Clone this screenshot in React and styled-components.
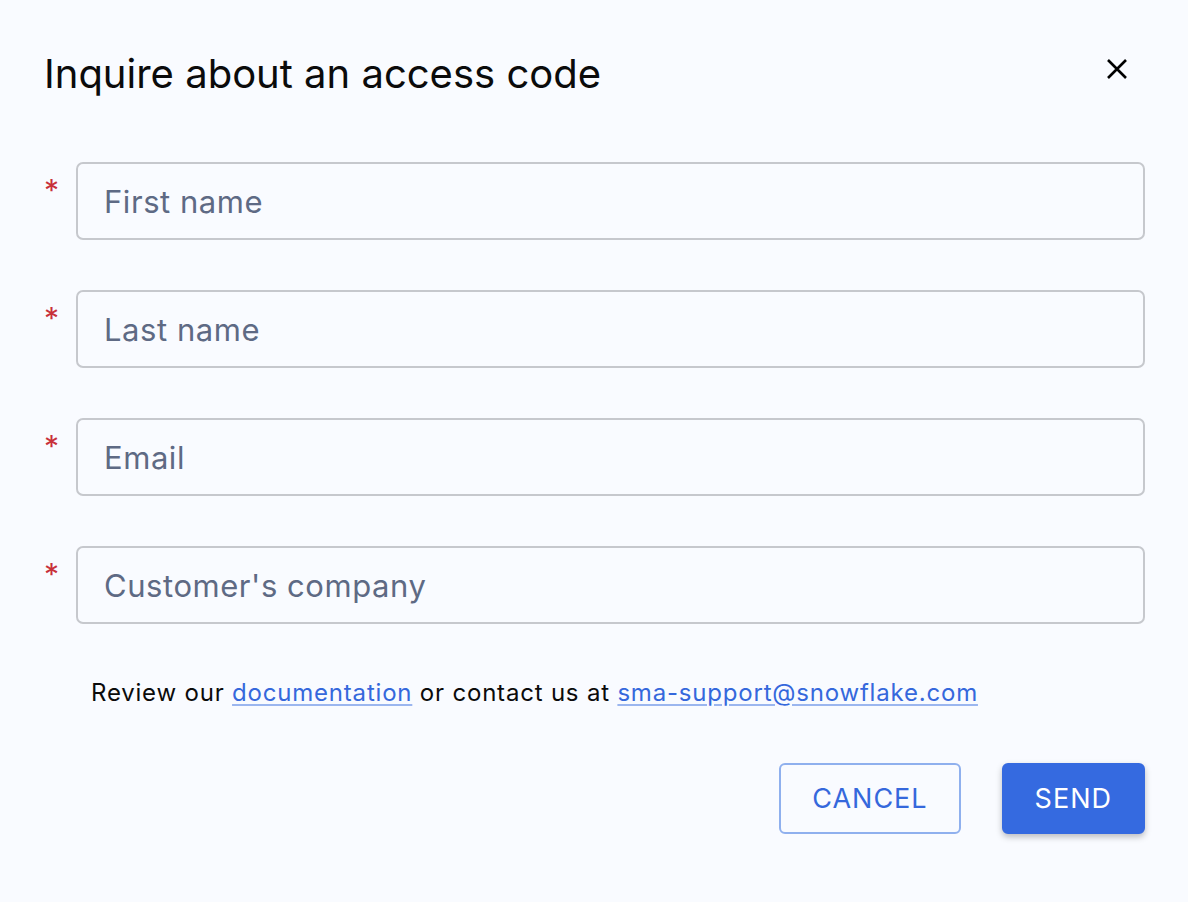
import React from 'react'
import styled, { createGlobalStyle } from 'styled-components'

const Global = createGlobalStyle`
  html, body {
    margin: 0;
    padding: 0;
    background: #f9fbff;
    font-family: Inter, "Noto Sans", sans-serif;
  }
`

const Dialog = styled.div`
  width: 1188px;
  height: 902px;
  box-sizing: border-box;
  padding: 44px 43px 0 44px;
  background: #f9fbff;
  display: flex;
  flex-direction: column;
`

const Header = styled.div`
  display: flex;
  justify-content: space-between;
  align-items: flex-start;
  height: 118px;
`

const Title = styled.h2`
  margin: 0;
  font-size: 40px;
  font-weight: 400;
  line-height: 60px;
  color: #0b0b0b;
`

const CloseButton = styled.button`
  border: none;
  background: none;
  padding: 0;
  margin: 13px 16px 0 0;
  width: 24px;
  height: 24px;
  cursor: pointer;
  display: flex;
  align-items: center;
  justify-content: center;
`

const Fields = styled.div`
  display: flex;
  flex-direction: column;
  gap: 50px;
`

const FieldRow = styled.div`
  display: flex;
  align-items: flex-start;
`

const Required = styled.span`
  width: 32px;
  color: #c8313a;
  font-size: 30px;
  line-height: 30px;
  padding-top: 13px;
`

const Input = styled.input`
  flex: 1;
  height: 78px;
  box-sizing: border-box;
  border: 2px solid #c6c8cd;
  border-radius: 7px;
  background: #f9fbff;
  padding: 0 26px;
  font-family: Inter, "Noto Sans", sans-serif;
  font-size: 31px;
  letter-spacing: 0.55px;
  color: #1b2230;
  outline: none;

  &::placeholder {
    color: #5e6a84;
  }
`

const Helper = styled.p`
  margin: 53px 0 0 47px;
  font-size: 24px;
  letter-spacing: 0.8px;
  line-height: 32px;
  color: #0b0b0b;
`

const Link = styled.a`
  color: #3568dc;
  text-decoration: underline;
  text-decoration-color: #9bb6ef;
  text-underline-offset: 3px;
`

const Actions = styled.div`
  display: flex;
  justify-content: flex-end;
  gap: 41px;
  margin-top: 54px;
`

const Button = styled.button`
  height: 71px;
  box-sizing: border-box;
  padding: 0 31px;
  border-radius: 6px;
  font-family: Inter, "Noto Sans", sans-serif;
  font-size: 27px;
  letter-spacing: 1px;
  text-transform: uppercase;
  cursor: pointer;
  border: 2px solid ${p => (p.$primary ? '#356ae0' : '#8fb0ee')};
  background: ${p => (p.$primary ? '#356ae0' : 'transparent')};
  color: ${p => (p.$primary ? '#ffffff' : '#3568dc')};
  box-shadow: ${p => (p.$primary ? '0 3px 6px rgba(0,0,0,0.25)' : 'none')};
`

const fields = ['First name', 'Last name', 'Email', "Customer's company"]

export default function App() {
  return (
    <>
      <Global />
      <Dialog>
        <Header>
          <Title>Inquire about an access code</Title>
          <CloseButton aria-label="close">
            <svg width="22" height="22" viewBox="0 0 22 22">
              <path d="M2 2L20 20M20 2L2 20" stroke="#000" strokeWidth="2.6" />
            </svg>
          </CloseButton>
        </Header>
        <Fields>
          {fields.map(f => (
            <FieldRow key={f}>
              <Required>*</Required>
              <Input placeholder={f} />
            </FieldRow>
          ))}
        </Fields>
        <Helper>
          Review our <Link href="#">documentation</Link> or contact us at{' '}
          <Link href="#">sma-support@snowflake.com</Link>
        </Helper>
        <Actions>
          <Button>Cancel</Button>
          <Button $primary>Send</Button>
        </Actions>
      </Dialog>
    </>
  )
}
